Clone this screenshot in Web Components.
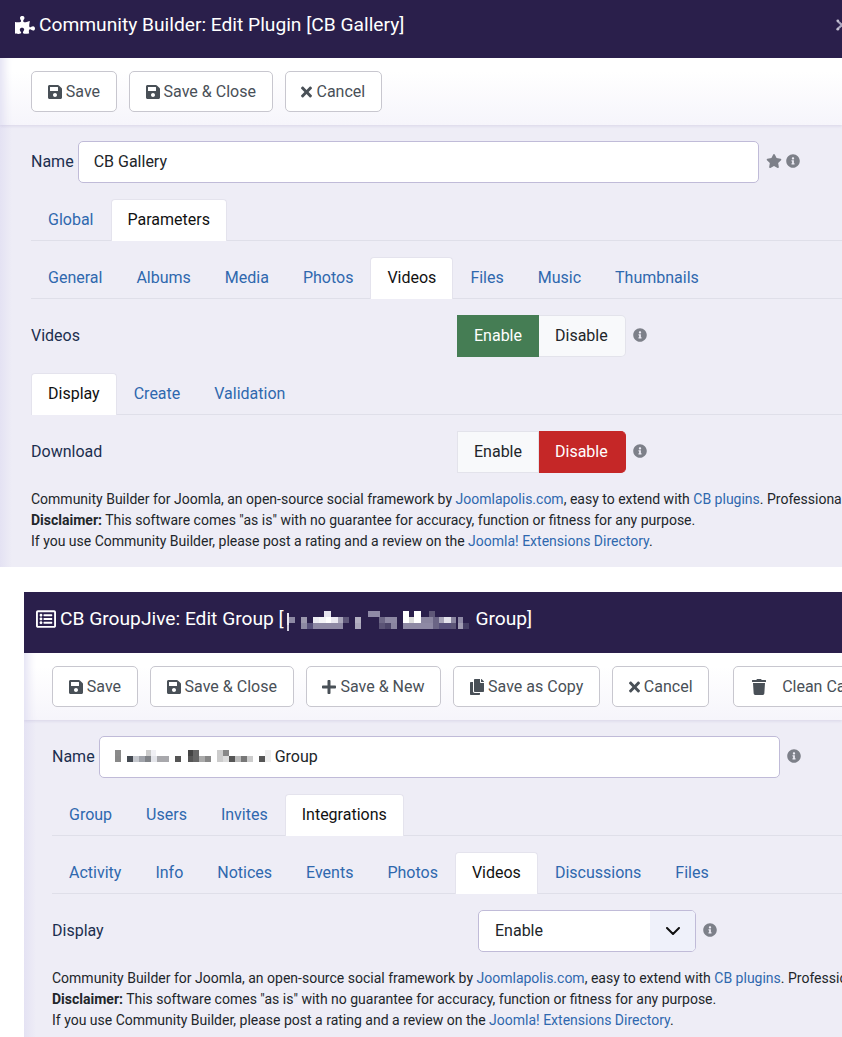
<!DOCTYPE html>
<html lang="en">
<head>
<meta charset="utf-8">
<title>Community Builder</title>
<style>
  html, body { margin: 0; height: 1037px; overflow: hidden; background: #fff; font-family: Roboto, "Liberation Sans", sans-serif; }
  cb-panel + cb-panel { margin: 25px 0 0 24px; }
</style>
</head>
<body>
<cb-panel style="--head-h:58px;--head-top:12px;--head-left:15px;--pad:31px">
  <cb-icon slot="title-icon" name="puzzle" style="width:20px;height:18px"></cb-icon>
  <span slot="title">Community Builder: Edit Plugin [CB Gallery]</span>
  <cb-joomla slot="title-end"></cb-joomla>
  <cb-button slot="tools" icon="save">Save</cb-button>
  <cb-button slot="tools" icon="save">Save &amp; Close</cb-button>
  <cb-button slot="tools" icon="times">Cancel</cb-button>

  <cb-name-row value="CB Gallery" star></cb-name-row>
  <cb-tabs items="Global,*Parameters"></cb-tabs>
  <cb-tabs items="General,Albums,Media,Photos,*Videos,Files,Music,Thumbnails"></cb-tabs>
  <cb-field label="Videos"><cb-toggle on="Enable"></cb-toggle></cb-field>
  <cb-tabs items="*Display,Create,Validation"></cb-tabs>
  <cb-field label="Download"><cb-toggle on="Disable"></cb-toggle></cb-field>
  <cb-footer></cb-footer>
</cb-panel>

<cb-panel style="--head-h:61px;--head-top:14px;--head-left:12px;--pad:28px">
  <cb-icon slot="title-icon" name="list" style="width:20px;height:20px"></cb-icon>
  <span slot="title">CB GroupJive: Edit Group [<cb-mosaic name="title"></cb-mosaic> Group]</span>
  <cb-button slot="tools" icon="save">Save</cb-button>
  <cb-button slot="tools" icon="save">Save &amp; Close</cb-button>
  <cb-button slot="tools" icon="plus">Save &amp; New</cb-button>
  <cb-button slot="tools" icon="copy">Save as Copy</cb-button>
  <cb-button slot="tools" icon="times">Cancel</cb-button>
  <cb-button slot="tools" icon="trash" wide style="margin-left:12px">Clean Cache</cb-button>

  <cb-name-row mosaic value="Group"></cb-name-row>
  <cb-tabs items="Group,Users,Invites,*Integrations"></cb-tabs>
  <cb-tabs items="Activity,Info,Notices,Events,Photos,*Videos,Discussions,Files"></cb-tabs>
  <cb-field label="Display"><cb-select value="Enable"></cb-select></cb-field>
  <cb-footer></cb-footer>
</cb-panel>

<script>
const ICONS = {
  save: ['0 0 448 512', 'M433.941 129.941l-83.882-83.882A48 48 0 0 0 316.118 32H48C21.49 32 0 53.49 0 80v352c0 26.51 21.49 48 48 48h352c26.51 0 48-21.49 48-48V163.882a48 48 0 0 0-14.059-33.941zM224 416c-35.346 0-64-28.654-64-64 0-35.346 28.654-64 64-64s64 28.654 64 64c0 35.346-28.654 64-64 64zm96-304.52V212c0 6.627-5.373 12-12 12H76c-6.627 0-12-5.373-12-12V108c0-6.627 5.373-12 12-12h228.52c3.183 0 6.235 1.264 8.485 3.515l3.48 3.48A11.996 11.996 0 0 1 320 111.48z'],
  times: ['0 0 352 512', 'M242.72 256l100.07-100.07c12.28-12.28 12.28-32.19 0-44.48l-22.24-22.24c-12.28-12.28-32.19-12.28-44.48 0L176 189.28 75.93 89.21c-12.28-12.28-32.19-12.28-44.48 0L9.21 111.45c-12.28 12.28-12.28 32.19 0 44.48L109.28 256 9.21 356.07c-12.28 12.28-12.28 32.19 0 44.48l22.24 22.24c12.28 12.28 32.2 12.28 44.48 0L176 322.72l100.07 100.07c12.28 12.28 32.2 12.28 44.48 0l22.24-22.24c12.28-12.28 12.28-32.19 0-44.48L242.72 256z'],
  plus: ['0 0 448 512', 'M416 208H272V64c0-17.67-14.33-32-32-32h-32c-17.67 0-32 14.33-32 32v144H32c-17.67 0-32 14.33-32 32v32c0 17.67 14.33 32 32 32h144v144c0 17.67 14.33 32 32 32h32c17.67 0 32-14.33 32-32V304h144c17.67 0 32-14.33 32-32v-32c0-17.67-14.33-32-32-32z'],
  copy: ['0 0 448 512', 'M320 448v40c0 13.255-10.745 24-24 24H24c-13.255 0-24-10.745-24-24V120c0-13.255 10.745-24 24-24h72v296c0 30.879 25.121 56 56 56h168zm0-344V0H152c-13.255 0-24 10.745-24 24v368c0 13.255 10.745 24 24 24h272c13.255 0 24-10.745 24-24V128H344c-13.2 0-24-10.8-24-24zm120.971-31.029L375.029 7.029A24 24 0 0 0 358.059 0H352v96h96v-6.059a24 24 0 0 0-7.029-16.97z'],
  trash: ['0 0 448 512', 'M432 32H312l-9.4-18.7A24 24 0 0 0 281.1 0H166.8a23.72 23.72 0 0 0-21.4 13.3L136 32H16A16 16 0 0 0 0 48v32a16 16 0 0 0 16 16h416a16 16 0 0 0 16-16V48a16 16 0 0 0-16-16zM53.2 467a48 48 0 0 0 47.9 45h245.8a48 48 0 0 0 47.9-45L416 128H32z'],
  info: ['0 0 512 512', 'M256 8C119.043 8 8 119.083 8 256c0 136.997 111.043 248 248 248s248-111.003 248-248C504 119.083 392.957 8 256 8zm0 110c23.196 0 42 18.804 42 42s-18.804 42-42 42-42-18.804-42-42 18.804-42 42-42zm56 254c0 6.627-5.373 12-12 12h-88c-6.627 0-12-5.373-12-12v-24c0-6.627 5.373-12 12-12h12v-64h-12c-6.627 0-12-5.373-12-12v-24c0-6.627 5.373-12 12-12h64c6.627 0 12 5.373 12 12v100h12c6.627 0 12 5.373 12 12v24z'],
  star: ['0 0 576 512', 'M259.3 17.8L194 150.2 47.9 171.5c-26.2 3.8-36.7 36.1-17.7 54.6l105.7 103-25 145.5c-4.5 26.3 23.2 46 46.4 33.7L288 439.6l130.7 68.7c23.2 12.2 50.9-7.4 46.4-33.7l-25-145.5 105.7-103c19-18.5 8.5-50.8-17.7-54.6L382 150.2 316.7 17.8c-11.7-23.6-45.6-23.9-57.4 0z'],
  puzzle: ['0 0 576 512', 'M519.442 288.651c-41.519 0-59.5 31.593-82.058 31.593C377.409 320.244 432 144 432 144s-196.288 80-196.288-3.297c0-35.827 36.288-46.25 36.288-85.985C272 19.216 243.885 0 210.539 0c-34.654 0-66.366 18.891-66.366 56.346 0 41.364 31.711 59.277 31.711 81.75C175.885 207.719 0 166.758 0 166.758v333.237s178.635 41.047 178.635-28.662c0-22.473-40-40.107-40-81.471 0-37.456 29.25-56.346 63.577-56.346 33.673 0 61.788 19.216 61.788 54.717 0 39.735-36.288 50.158-36.288 85.985 0 60.803 129.675 25.73 181.23 25.73 0 0-34.725-120.101 25.827-120.101 35.962 0 46.423 36.152 86.308 36.152C556.712 416 576 387.99 576 354.443c0-34.199-18.962-65.792-56.558-65.792z'],
  list: ['0 0 512 512', 'M464 32H48C21.49 32 0 53.49 0 80v352c0 26.51 21.49 48 48 48h416c26.51 0 48-21.49 48-48V80c0-26.51-21.49-48-48-48zm-6 400H54a6 6 0 0 1-6-6V86a6 6 0 0 1 6-6h404a6 6 0 0 1 6 6v340a6 6 0 0 1-6 6zm-42-92v24c0 6.627-5.373 12-12 12H204c-6.627 0-12-5.373-12-12v-24c0-6.627 5.373-12 12-12h200c6.627 0 12 5.373 12 12zm0-96v24c0 6.627-5.373 12-12 12H204c-6.627 0-12-5.373-12-12v-24c0-6.627 5.373-12 12-12h200c6.627 0 12 5.373 12 12zm0-96v24c0 6.627-5.373 12-12 12H204c-6.627 0-12-5.373-12-12v-24c0-6.627 5.373-12 12-12h200c6.627 0 12 5.373 12 12zm-252 12c0 19.882-16.118 36-36 36s-36-16.118-36-36 16.118-36 36-36 36 16.118 36 36zm0 96c0 19.882-16.118 36-36 36s-36-16.118-36-36 16.118-36 36-36 36 16.118 36 36zm0 96c0 19.882-16.118 36-36 36s-36-16.118-36-36 16.118-36 36-36 36 16.118 36 36z']
};

// pixelated (redacted) blocks of the screenshot: [x, y, width, colour] in 3x units
const MOSAICS = {
  title: { box: [24, 0, 561, 90], h: 18, cells: [
    [145,18,20,'#e6e4ee'],[275,18,36,'#8f8aa6'],[380,18,18,'#fff'],[415,18,20,'#fff'],[460,18,18,'#5f5878'],
    [33,24,5,'#e8e6ef'],[33,42,5,'#e8e6ef'],[33,60,5,'#d0cddc'],
    [38,36,18,'#8d89a3'],[76,36,18,'#9c98ae'],[110,36,20,'#ecebf2'],[130,36,20,'#f5f5f8'],[150,36,15,'#fff'],[165,36,20,'#ebeaf2'],[185,36,15,'#a9a6ba'],[200,36,18,'#5d5678'],
    [238,36,16,'#b4b1c2'],[310,36,18,'#6d6786'],[328,36,36,'#8e89a4'],[380,36,18,'#fff'],[398,36,17,'#ddd'],[415,36,20,'#fff'],[435,36,35,'#8a85a0'],[470,36,20,'#6b6585'],[490,36,15,'#a9a6ba'],[505,36,20,'#e4e3ec'],[525,36,15,'#8a85a0'],[545,36,15,'#8f8aa6'],
    [76,54,18,'#8d89a3'],[94,54,16,'#57507a'],[110,54,90,'#8e89a4'],[238,54,16,'#aaa7ba'],[310,54,18,'#5b5476'],[328,54,18,'#4c4569'],[346,54,18,'#8a85a0'],[380,54,90,'#8e89a4'],[470,54,20,'#6b6585'],[490,54,35,'#57507a'],[525,54,15,'#5b5476'],[545,54,15,'#a09cb2'],[560,54,18,'#453e64']
  ]},
  name: { box: [27, 22, 468, 36], h: 18, cells: [
    [27,22,18,'#8a8a8a'],[120,22,15,'#ccc'],[135,22,15,'#f0f0f4'],[245,22,17,'#444'],[262,22,16,'#666'],[333,22,17,'#ccc'],[350,22,18,'#888'],[478,22,17,'#eee'],
    [27,40,18,'#888'],[64,40,18,'#444a52'],[82,40,18,'#c5c8ce'],[100,40,18,'#a0a3aa'],[118,40,17,'#808388'],[135,40,17,'#e4e5ea'],[152,40,36,'#a8a8ac'],[208,40,18,'#555'],[245,40,17,'#555'],[262,40,18,'#666'],[280,40,18,'#aaa'],[298,40,18,'#888'],[333,40,17,'#ccc'],[350,40,18,'#ddd'],[368,40,18,'#555'],[386,40,18,'#bbb'],[404,40,18,'#777'],[422,40,18,'#ccc'],[460,40,18,'#555'],[478,40,17,'#eee']
  ]}
};

class CbIcon extends HTMLElement {
  connectedCallback() {
    const [box, d] = ICONS[this.getAttribute('name')];
    const width = box.split(' ')[2] / 32;
    this.attachShadow({ mode: 'open' }).innerHTML = `
      <style>
        :host { display: inline-block; width: ${width}px; height: 16px; flex: none; }
        svg { display: block; width: 100%; height: 100%; fill: currentColor; }
      </style>
      <svg viewBox="${box}" aria-hidden="true"><path d="${d}"/></svg>`;
  }
}

class CbMosaic extends HTMLElement {
  connectedCallback() {
    const { box, h, cells } = MOSAICS[this.getAttribute('name')];
    const rects = cells.map(([x, y, w, c]) => `<rect x="${x}" y="${y}" width="${w}" height="${h}" fill="${c}"/>`).join('');
    this.attachShadow({ mode: 'open' }).innerHTML = `
      <style>
        :host { display: inline-block; width: ${box[2] / 3}px; height: ${box[3] / 3}px; vertical-align: top; }
        svg { display: block; width: 100%; height: 100%; }
      </style>
      <svg viewBox="${box.join(' ')}" shape-rendering="crispEdges" aria-hidden="true">${rects}</svg>`;
    if (this.getAttribute('name') === 'title') this.style.margin = '-1px 0 -10px';
  }
}

class CbJoomla extends HTMLElement {
  constructor() {
    super();
    this.attachShadow({ mode: 'open' }).innerHTML = `
      <style>
        :host { display: block; width: 12px; height: 12px; margin: 7px -6px 0 auto; flex: none; }
        svg { display: block; width: 12px; height: 12px; }
      </style>
      <svg viewBox="0 0 12 12" aria-hidden="true">
        <path d="M1.5 2 10.5 10M10.5 2 1.5 10" stroke="#a9a5bd" stroke-width="2.2" fill="none"/>
        <circle cx="1.8" cy="1.8" r="1.4" fill="#c2bfd0"/><circle cx="1.8" cy="10.2" r="1.4" fill="#c2bfd0"/>
      </svg>`;
  }
}

const panelTemplate = document.createElement('template');
panelTemplate.innerHTML = `
  <style>
    :host { display: block; overflow: hidden; background: #eeedf6; color: #1c2f4f; }
    header {
      display: flex; align-items: flex-start; gap: 4px; box-sizing: border-box;
      height: var(--head-h); padding: var(--head-top) 0 0 var(--head-left);
      background: #2a1f4b; color: #fff;
      font-size: 19.2px; line-height: 26px; white-space: nowrap; overflow: hidden;
    }
    .mark { display: flex; align-items: center; height: 26px; }
    .tools {
      display: flex; gap: 12px; box-sizing: border-box; height: 67px; padding: 13px 0 13px var(--pad);
      background: linear-gradient(#fff 20%, #f6f5fb);
      box-shadow: inset 12px 0 10px -8px #e2e0f2, 0 1px 3px rgba(90, 80, 150, .14);
      position: relative; overflow: hidden;
    }
    main {
      display: flex; flex-direction: column; gap: 16px; padding: 16px 0 15px var(--pad);
      background: linear-gradient(90deg, #e4e2f3, #eeedf6 12px);
    }
  </style>
  <header><span class="mark"><slot name="title-icon"></slot></span><slot name="title"></slot><slot name="title-end"></slot></header>
  <div class="tools"><slot name="tools"></slot></div>
  <main><slot></slot></main>
`;

class CbPanel extends HTMLElement {
  constructor() {
    super();
    this.attachShadow({ mode: 'open' }).appendChild(panelTemplate.content.cloneNode(true));
  }
}

class CbButton extends HTMLElement {
  connectedCallback() {
    const icon = this.getAttribute('icon');
    const wide = this.hasAttribute('wide');
    this.attachShadow({ mode: 'open' }).innerHTML = `
      <style>
        :host {
          display: inline-flex; align-items: center; flex: none; gap: ${wide ? 16 : 4}px; box-sizing: border-box; height: 41px;
          padding: 0 15.8px; background: #fff; border: 1px solid #c8c7cf; border-radius: 5px;
          color: #495057; font-size: 16px; white-space: nowrap;
        }
        cb-icon { margin-left: ${wide ? 2 : 0}px; }
      </style>
      <cb-icon name="${icon}"></cb-icon><slot></slot>`;
  }
}

class CbTabs extends HTMLElement {
  connectedCallback() {
    const tabs = this.getAttribute('items').split(',').map(t =>
      t[0] === '*' ? `<b>${t.slice(1)}</b>` : `<a href="#">${t}</a>`).join('');
    this.attachShadow({ mode: 'open' }).innerHTML = `
      <style>
        :host { display: flex; height: 42px; box-sizing: border-box; border-bottom: 1px solid #dfdfe9; font-size: 16px; }
        a, b { display: flex; align-items: center; box-sizing: border-box; height: 42px; padding: 0 17px 2px; font-weight: 400; text-decoration: none; }
        a { color: #2f68ae; }
        b { color: #111; background: #fff; border: 1px solid #e4e3ed; border-bottom: 0; border-radius: 4px 4px 0 0; padding: 0 16px 2px; }
      </style>${tabs}`;
  }
}

class CbField extends HTMLElement {
  connectedCallback() {
    this.attachShadow({ mode: 'open' }).innerHTML = `
      <style>
        :host { display: flex; align-items: center; height: 42px; font-size: 16px; color: #1c2f4f; }
        span { width: 426px; flex: none; padding-bottom: 2px; }
        cb-icon { width: 14px; height: 14px; margin: -3px 0 0 7px; color: #7d8089; }
      </style>
      <span>${this.getAttribute('label')}</span><slot></slot><cb-icon name="info"></cb-icon>`;
  }
}

class CbNameRow extends HTMLElement {
  connectedCallback() {
    const star = this.hasAttribute('star');
    const mosaic = this.hasAttribute('mosaic');
    this.attachShadow({ mode: 'open' }).innerHTML = `
      <style>
        :host { display: flex; align-items: center; height: 42px; font-size: 16px; color: #1c2f4f; }
        span { padding-bottom: 2px; }
        .box {
          display: flex; align-items: center; box-sizing: border-box; width: 681px; height: 42px; margin-left: 4px; padding: 0 15px 2px;
          background: #fff; border: 1px solid #c0bbd8; border-radius: 5px; color: #212529;
        }
        cb-mosaic { margin-right: 4px; }
        cb-icon { color: #7d8089; width: 14px; height: 14px; margin-top: -2px; }
        .star { width: 16px; margin-left: 7px; }
        .info { margin-left: ${star ? 4 : 7}px; }
      </style>
      <span>Name</span>
      <div class="box">${mosaic ? '<cb-mosaic name="name"></cb-mosaic>' : ''}${this.getAttribute('value')}</div>
      ${star ? '<cb-icon class="star" name="star"></cb-icon>' : ''}<cb-icon class="info" name="info"></cb-icon>`;
  }
}

class CbToggle extends HTMLElement {
  connectedCallback() {
    const on = this.getAttribute('on');
    this.attachShadow({ mode: 'open' }).innerHTML = `
      <style>
        :host { display: inline-flex; height: 42px; font-size: 16px; color: #212529; }
        div { display: flex; align-items: center; box-sizing: border-box; padding: 0 16px 2px; background: #f8f9fb; border: 1px solid #e3e3eb; }
        div:first-child { border-radius: 5px 0 0 5px; border-right: 0; width: 82px; padding-right: 0; }
        div:last-child { border-radius: 0 5px 5px 0; border-left: 0; width: 87px; padding-right: 0; }
        .Enable { background: #457d54; border-color: #457d54; color: #fff; }
        .Disable { background: #c52727; border-color: #c52727; color: #fff; }
      </style>
      <div class="${on === 'Enable' ? 'Enable' : ''}">Enable</div>
      <div class="${on === 'Disable' ? 'Disable' : ''}">Disable</div>`;
  }
}

class CbSelect extends HTMLElement {
  connectedCallback() {
    this.attachShadow({ mode: 'open' }).innerHTML = `
      <style>
        :host {
          display: flex; box-sizing: border-box; width: 218px; height: 42px; overflow: hidden; font-size: 16px; color: #212529;
          background: #fff; border: 1px solid #c0bbd8; border-radius: 5px;
        }
        span { flex: 1; align-self: center; padding: 0 0 2px 16px; }
        i { display: flex; align-items: center; justify-content: center; width: 45px; background: #eff1fa; }
        svg { width: 14px; height: 8px; }
      </style>
      <span>${this.getAttribute('value')}</span>
      <i><svg viewBox="0 0 14 8" aria-hidden="true"><path d="M1 1l6 6 6-6" fill="none" stroke="#111" stroke-width="2" stroke-linecap="round" stroke-linejoin="round"/></svg></i>`;
  }
}

const footerTemplate = document.createElement('template');
footerTemplate.innerHTML = `
  <style>
    :host { display: block; font-size: 14px; line-height: 21px; color: #22262a; white-space: nowrap; }
    a { color: #2f68ae; text-decoration: none; }
    b { font-weight: 700; }
  </style>
  <div>Community Builder for Joomla, an open-source social framework by <a href="#">Joomlapolis.com</a>, easy to extend with <a href="#">CB plugins</a>. Professional</div>
  <div><b>Disclaimer:</b> This software comes "as is" with no guarantee for accuracy, function or fitness for any purpose.</div>
  <div>If you use Community Builder, please post a rating and a review on the <a href="#">Joomla! Extensions Directory</a>.</div>
`;

class CbFooter extends HTMLElement {
  constructor() {
    super();
    this.attachShadow({ mode: 'open' }).appendChild(footerTemplate.content.cloneNode(true));
  }
}

customElements.define('cb-icon', CbIcon);
customElements.define('cb-mosaic', CbMosaic);
customElements.define('cb-joomla', CbJoomla);
customElements.define('cb-panel', CbPanel);
customElements.define('cb-button', CbButton);
customElements.define('cb-tabs', CbTabs);
customElements.define('cb-field', CbField);
customElements.define('cb-name-row', CbNameRow);
customElements.define('cb-toggle', CbToggle);
customElements.define('cb-select', CbSelect);
customElements.define('cb-footer', CbFooter);
</script>
</body>
</html>
